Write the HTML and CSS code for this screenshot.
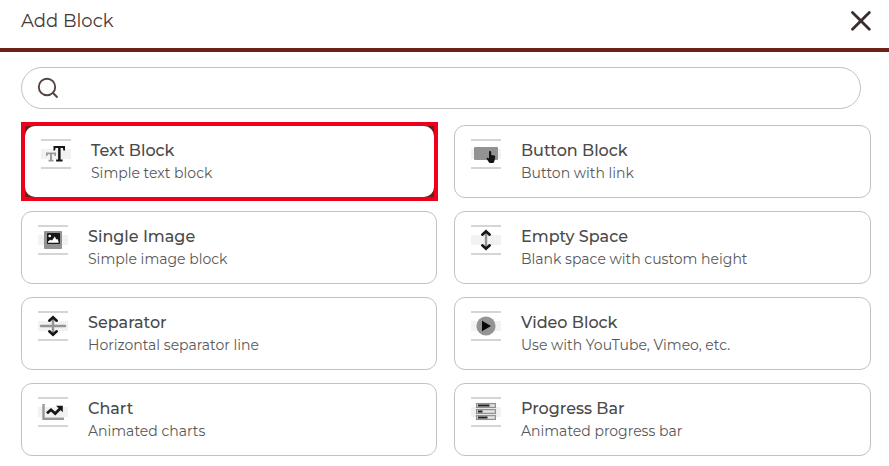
FILE: index.html
```html
<!DOCTYPE html>
<html lang="en">
<head>
<meta charset="utf-8">
<meta name="viewport" content="width=device-width, initial-scale=1">
<title>Add Block</title>
<link rel="stylesheet" href="styles.css">
</head>
<body>
<header class="header">
  <h1 class="title">Add Block</h1>
  <button class="close" type="button" aria-label="Close">
    <svg width="20" height="20" viewBox="0 0 20 20"><path d="M1.5 1.5 18.3 18.3M18.3 1.5 1.5 18.3" fill="none" stroke="#3a2d2b" stroke-width="2.8" stroke-linecap="round"/></svg>
  </button>
</header>
<main class="content">
  <label class="search">
    <svg width="22" height="22" viewBox="0 0 22 22" aria-hidden="true"><g fill="none" stroke="#54433f" stroke-width="1.9"><circle cx="10" cy="10" r="8.2"/><path d="m15.5 15.5 5 5"/></g></svg>
    <input class="search-input" type="search" aria-label="Search blocks">
  </label>
  <div class="grid">
    <button class="card selected" type="button">
      <span class="card-body">
        <svg class="icon" viewBox="0 0 30 30"><path fill="#d5d5d5" d="M0 0h30v2H0zM0 28h30v2H0z"/><path fill="#f2f2f2" d="M0 10h30v10H0z"/><path fill="#999" d="M5 13.5h10v3.4h-1.4l-.4-1.7H11v5.6h1.5v1.6h-5v-1.6H9v-5.6H6.8l-.4 1.7H5z"/><path fill="#171717" d="M12.5 7H24v4.6h-1.6L21.8 9h-2.2v11.5h2v1.9h-6.5v-1.9h2V9h-2.5l-.6 2.6h-1.5z"/></svg>
        <span class="text"><span class="name">Text Block</span><span class="desc">Simple text block</span></span>
      </span>
    </button>
    <button class="card" type="button">
      <span class="card-body">
        <svg class="icon" viewBox="0 0 30 30"><path fill="#d5d5d5" d="M0 0h30v2H0zM0 28h30v2H0z"/><path fill="#f2f2f2" d="M0 10h30v10H0z"/><rect x="3" y="8" width="24" height="13" rx="1" fill="#929292"/><path fill="#151515" d="M18 13c0-1.3 2.2-1.3 2.2 0v3l3.2.6q1 .3.8 1.4l-.7 3.7-1 2.3h-4.1l-2.7-4.1q-.3-1.3 1-1.1l1.3.8z"/></svg>
        <span class="text"><span class="name">Button Block</span><span class="desc">Button with link</span></span>
      </span>
    </button>
    <button class="card" type="button">
      <span class="card-body">
        <svg class="icon" viewBox="0 0 30 30"><path fill="#d5d5d5" d="M0 0h30v2H0zM0 28h30v2H0z"/><path fill="#f2f2f2" d="M0 10h30v10H0z"/><rect x="6" y="6" width="18" height="18" rx="1" fill="#929292"/><rect x="9" y="8" width="13" height="11" rx=".8" fill="#171717"/><circle cx="11.7" cy="11" r="1.3" fill="#fff"/><path fill="#fff" d="M10 17.8v-1.3l2.5-1.7 1.5.8 2.8-4 1.5 2.8 1-.6 1.3 2.7v1.3z"/></svg>
        <span class="text"><span class="name">Single Image</span><span class="desc">Simple image block</span></span>
      </span>
    </button>
    <button class="card" type="button">
      <span class="card-body">
        <svg class="icon" viewBox="0 0 30 30"><path fill="#d5d5d5" d="M0 0h30v2H0zM0 28h30v2H0z"/><path fill="#f2f2f2" d="M0 10h30v10H0z"/><path stroke="#949494" stroke-width="2.4" d="M15 7v16"/><path fill="none" stroke="#151515" stroke-width="2.6" stroke-linecap="round" d="m11.3 9.7 3.7-3.5 3.7 3.5M11.3 20.3l3.7 3.5 3.7-3.5"/></svg>
        <span class="text"><span class="name">Empty Space</span><span class="desc">Blank space with custom height</span></span>
      </span>
    </button>
    <button class="card" type="button">
      <span class="card-body">
        <svg class="icon" viewBox="0 0 30 30"><path fill="#d5d5d5" d="M0 0h30v2H0zM0 28h30v2H0z"/><path fill="#f2f2f2" d="M0 10h30v10H0z"/><path stroke="#949494" stroke-width="2.4" stroke-linecap="round" d="M15 7v16M3 15h24"/><path fill="none" stroke="#151515" stroke-width="2.6" stroke-linecap="round" d="m11.3 9.7 3.7-3.5 3.7 3.5M11.3 20.3l3.7 3.5 3.7-3.5"/></svg>
        <span class="text"><span class="name">Separator</span><span class="desc">Horizontal separator line</span></span>
      </span>
    </button>
    <button class="card" type="button">
      <span class="card-body">
        <svg class="icon" viewBox="0 0 30 30"><path fill="#d5d5d5" d="M0 0h30v2H0zM0 28h30v2H0z"/><path fill="#f2f2f2" d="M0 10h30v10H0z"/><circle cx="15" cy="15" r="9.6" fill="#949494"/><path fill="#080808" d="M11 9.8 20 15l-9 5.2z"/></svg>
        <span class="text"><span class="name">Video Block</span><span class="desc">Use with YouTube, Vimeo, etc.</span></span>
      </span>
    </button>
    <button class="card" type="button">
      <span class="card-body">
        <svg class="icon" viewBox="0 0 30 30"><path fill="#d5d5d5" d="M0 0h30v2H0zM0 28h30v2H0z"/><path fill="#f2f2f2" d="M0 10h30v10H0z"/><path fill="none" stroke="#999" stroke-width="2.4" d="M5.5 7v14.8H26"/><path fill="none" stroke="#171717" stroke-width="2.8" d="m9 16.3 4-3.5 4.2 3.7 5.3-5.3"/><path fill="#171717" d="M18 8.8h6.8v6.4z"/></svg>
        <span class="text"><span class="name">Chart</span><span class="desc">Animated charts</span></span>
      </span>
    </button>
    <button class="card" type="button">
      <span class="card-body">
        <svg class="icon" viewBox="0 0 30 30"><path fill="#d5d5d5" d="M0 0h30v2H0zM0 28h30v2H0z"/><path fill="#f2f2f2" d="M0 10h30v10H0z"/><g fill="#e4e4e4" stroke="#929292" stroke-width="1.3"><rect x="5.6" y="6.6" width="18.8" height="3.8"/><rect x="5.6" y="12.6" width="18.8" height="3.8"/><rect x="5.6" y="18.6" width="18.8" height="3.8"/></g><path stroke="#222" stroke-width="2" d="M7 8.5h11.5M7 14.5h4.5M7 20.5h9.5"/></svg>
        <span class="text"><span class="name">Progress Bar</span><span class="desc">Animated progress bar</span></span>
      </span>
    </button>
  </div>
</main>
</body>
</html>
```
FILE: styles.css
```css
* {
  box-sizing: border-box;
}

body {
  margin: 0;
  background: #fff;
  color: #4a4a4a;
  font-family: Montserrat, Inter, "Open Sans", sans-serif;
}

button,
input {
  font: inherit;
  color: inherit;
}

.header {
  display: flex;
  align-items: center;
  justify-content: space-between;
  padding: 7px 18px 13px 21px;
  border-bottom: 4px solid #6b2119;
}

.title {
  margin: 0;
  color: #443936;
  font-size: 18px;
  font-weight: 400;
  line-height: 28px;
}

.close {
  display: flex;
  padding: 4px 0;
  border: 0;
  background: none;
}

.content {
  padding: 15px 18px 10px 21px;
}

.search {
  display: flex;
  align-items: center;
  gap: 12px;
  height: 42px;
  margin: 0 10px 16px 0;
  padding: 0 15px;
  border: 1px solid #c2c2c2;
  border-radius: 21px;
}

.search-input {
  flex: 1;
  min-width: 0;
  border: 0;
  outline: 0;
  background: none;
}

.grid {
  display: grid;
  grid-template-columns: calc(50% - 9px) 1fr;
  gap: 13px 17px;
}

.card {
  display: flex;
  min-height: 73px;
  padding: 0;
  border: 1px solid #c2c2c2;
  border-radius: 11px;
  background: #fff;
  text-align: left;
}

.card-body {
  display: flex;
  flex: 1;
  align-self: stretch;
  align-items: flex-start;
  gap: 20px;
  padding: 13px 16px;
}

.selected {
  margin: -3px -1px -3px 0;
  border: 4px solid #ee001c;
  border-radius: 0;
  background: #6b2119;
}

.selected .card-body {
  border-radius: 10px;
  background: #fff;
}

.icon {
  flex: none;
  width: 30px;
  height: 30px;
}

.text {
  display: flex;
  flex-direction: column;
  padding-top: 1px;
  line-height: 22px;
}

.name {
  font-size: 16px;
  font-weight: 500;
}

.desc {
  color: #585858;
  font-size: 14px;
  font-weight: 400;
}
```
